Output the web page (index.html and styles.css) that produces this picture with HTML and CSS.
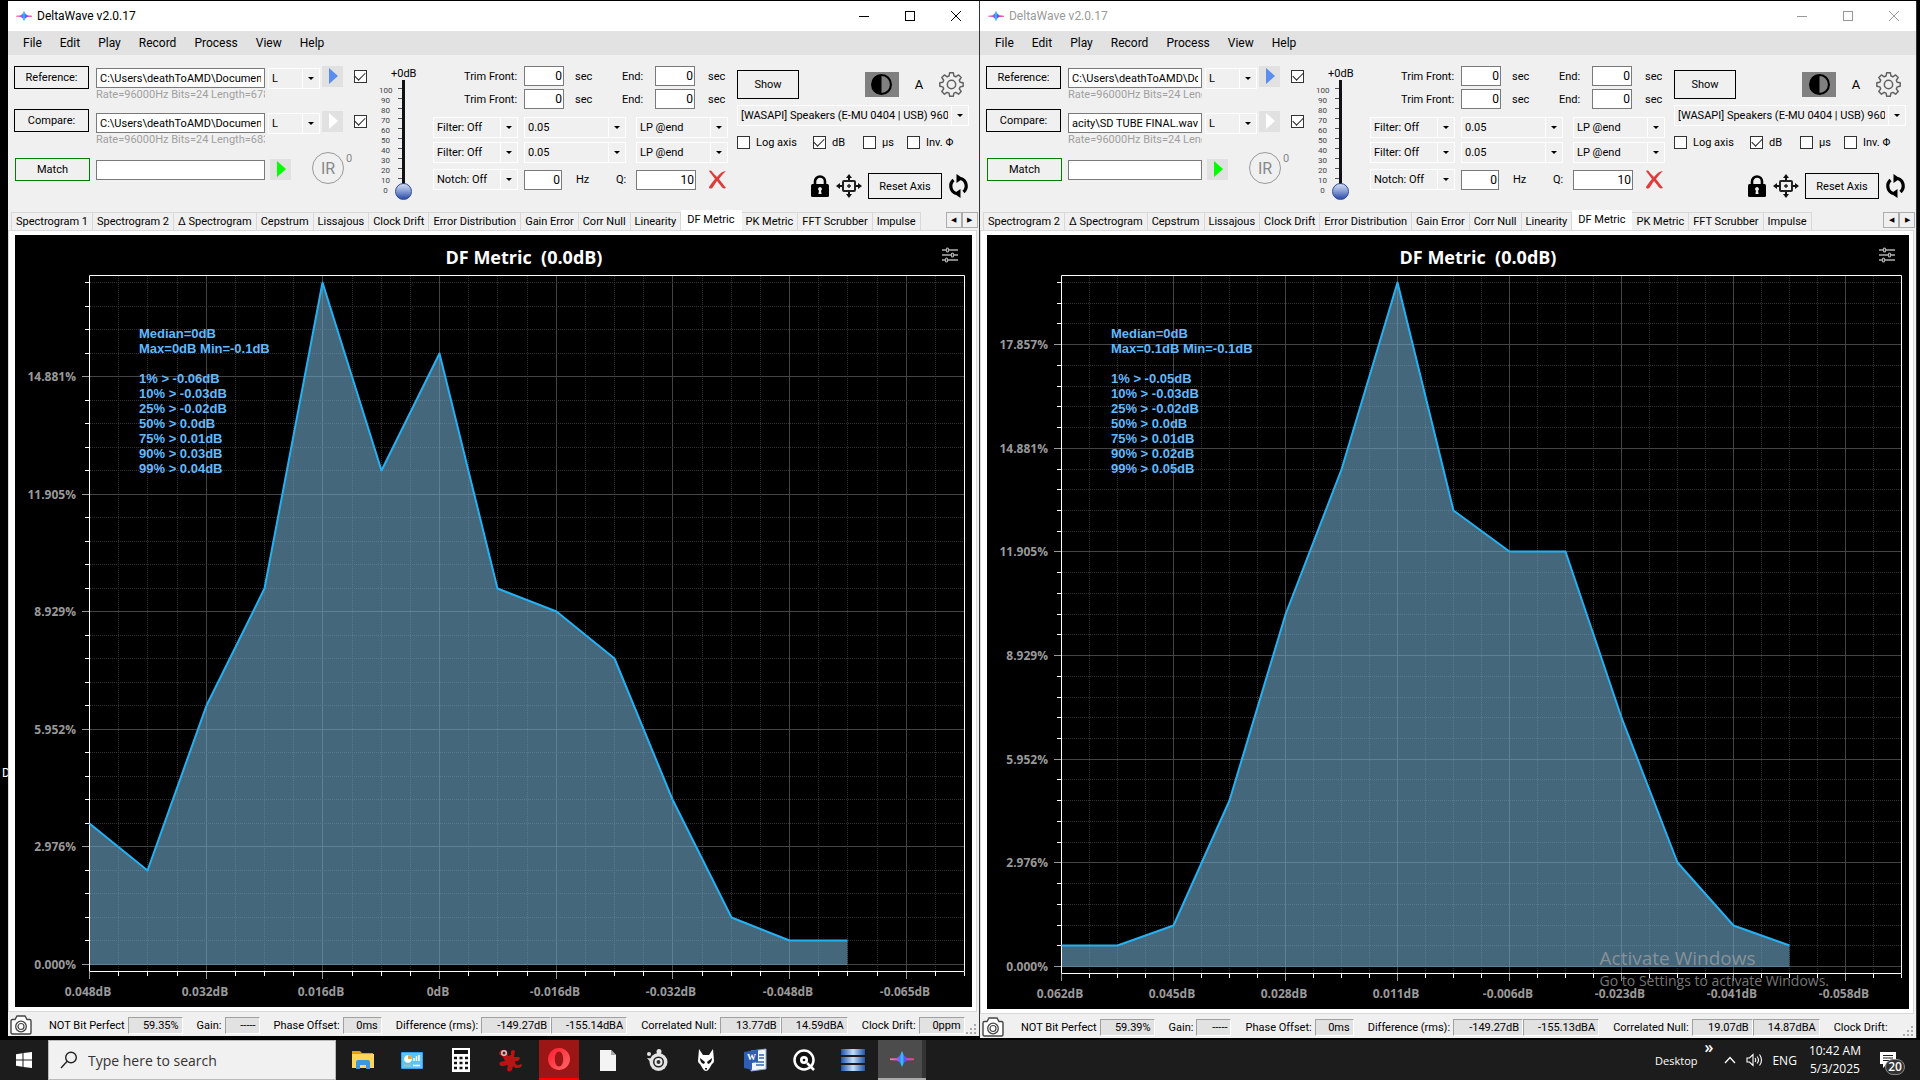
FILE: index.html
```html
<!DOCTYPE html>
<html lang="en">
<head>
    <meta charset="UTF-8">
    <meta name="viewport" content="width=device-width, initial-scale=1.0">
    <title>DeltaWave v2.0.17</title>
    <link rel="stylesheet" href="styles.css">
</head>
<body>
    <!-- shared icons -->
    <svg class="sprite" aria-hidden="true">
        <defs>
            <linearGradient id="wave-h" x1="0" x2="1" y1="0" y2="0">
                <stop offset="0" stop-color="#ff8a9a"/>
                <stop offset=".25" stop-color="#e050c0"/>
                <stop offset=".4" stop-color="#5a6cff"/>
                <stop offset=".5" stop-color="#19d8ff"/>
                <stop offset=".6" stop-color="#5a50ff"/>
                <stop offset=".8" stop-color="#e040c0"/>
                <stop offset="1" stop-color="#ff4a70"/>
            </linearGradient>
            <linearGradient id="bar-blue" x1="0" x2="1" y1="0" y2="0">
                <stop offset="0" stop-color="#1d55a8"/>
                <stop offset=".5" stop-color="#c4dcf8"/>
                <stop offset="1" stop-color="#1d55a8"/>
            </linearGradient>
            <linearGradient id="opera-red" x1="0" x2="1" y1="0" y2="1">
                <stop offset="0" stop-color="#ff1b2d"/>
                <stop offset="1" stop-color="#ff6a6a"/>
            </linearGradient>
        </defs>
        <symbol id="i-wave" viewBox="0 0 24 24">
            <path d="M0 11.500 L7 11 L10 8.500 L12 4 L14 8.500 L17 11 L24 11.500 V13 L17 13.500 L14 15.500 L12 20 L10 15.500 L7 13.500 L0 13 Z" fill="url(#wave-h)"/>
        </symbol>
        <symbol id="i-play" viewBox="0 0 21 21">
            <path d="M7 2 L16 10 L7 18 Z" fill="currentColor"/>
        </symbol>
        <symbol id="i-contrast" viewBox="0 0 20 20">
            <circle cx="10" cy="10" r="9" fill="none" stroke="#000" stroke-width="2"/>
            <path d="M10 1 A9 9 0 0 0 10 19 Z" fill="#000"/>
        </symbol>
        <symbol id="i-gear" viewBox="0 0 24 24">
            <path fill="none" stroke="#606060" stroke-width="1.4" stroke-linejoin="round" d="M10.2 .8h3.6l.5 3 1.9.8 2.6-1.8 2.5 2.5-1.8 2.6.8 1.9 2.9.5v3.4l-2.9.6-.8 1.9 1.8 2.5-2.5 2.6-2.6-1.8-1.9.8-.5 2.9h-3.6l-.5-2.9-1.9-.8-2.6 1.8-2.5-2.6 1.8-2.5-.8-1.9-2.9-.6v-3.4l2.9-.5.8-1.9L2.7 5.300l2.5-2.5 2.6 1.800 1.900-.8z"/>
            <circle cx="12" cy="12" r="4" fill="none" stroke="#606060" stroke-width="1.4"/>
        </symbol>
        <symbol id="i-cross" viewBox="0 0 19 19">
            <path d="M1 1 C3 0 4 1 5 3 L9 7 C12 3 15 1 18 1 C15 4 13 6 11 9 L18 18 C16 19 14 18 13 16 L9 11 L5 17 C4 19 1 19 1 17 C3 14 5 11 7 9 Z" fill="#dd3c3c"/>
        </symbol>
        <symbol id="i-lock" viewBox="0 0 20 22">
            <path d="M5 10 V6.500 a5 5 0 0 1 10 0 V10" fill="none" stroke="#000" stroke-width="2.600"/>
            <rect x="1" y="9" width="18" height="13" rx="1.500"/>
            <path d="M10 12 a2 2 0 0 1 1 3.700 l.6 3.300 h-3.200 l.6-3.300 a2 2 0 0 1 1-3.700z" fill="#eee"/>
        </symbol>
        <symbol id="i-move" viewBox="0 0 26 24">
            <rect x="7" y="7" width="12" height="10" rx="1" fill="none" stroke="#222" stroke-width="2"/>
            <path d="M13 10 v4 M11 12 h4" stroke="#222" stroke-width="1.400"/>
            <path d="M13 0 l3 4 h-2 v2 h-2 v-2 h-2z M13 24 l3-4 h-2 v-2 h-2 v2 h-2z M0 12 l4-3 v2 h2 v2 h-2 v2z M26 12 l-4-3 v2 h-2 v2 h2 v2z" fill="#111"/>
        </symbol>
        <symbol id="i-refresh" viewBox="0 0 20 24">
            <path d="M7.500 19.500 A8 8 0 0 1 5 6" fill="none" stroke="#000" stroke-width="3.200"/>
            <path d="M12.500 4.500 A8 8 0 0 1 15 18" fill="none" stroke="#000" stroke-width="3.200"/>
            <path d="M8 0 L8 9 L14.500 4.500 Z M12 15 L12 24 L5.500 19.500 Z"/>
        </symbol>
        <symbol id="i-sliders" viewBox="0 0 16 16">
            <path d="M0 3 H4 M7 3 H16 M0 8 H9 M12 8 H16 M0 13 H3 M6 13 H16" stroke="#b0b0b0" stroke-width="1.400"/>
            <g fill="none" stroke="#b0b0b0" stroke-width="1.200">
                <rect x="4.500" y="1" width="2" height="4" rx="1"/>
                <rect x="9.500" y="6" width="2" height="4" rx="1"/>
                <rect x="3.500" y="11" width="2" height="4" rx="1"/>
            </g>
        </symbol>
        <symbol id="i-camera" viewBox="0 0 22 20">
            <path d="M1 6 q0-1.500 1.500-1.500 H5 L7 1 h8 l2 3.500 h2.500 q1.500 0 1.500 1.500 V17.500 q0 1.500-1.500 1.500 h-17 q-1.500 0-1.500-1.500z" fill="#fff" stroke="#444" stroke-width="1.400"/>
            <circle cx="11" cy="11.500" r="5.300" fill="none" stroke="#444" stroke-width="1.300"/>
            <circle cx="11" cy="11.500" r="3" fill="none" stroke="#444" stroke-width="1.200"/>
        </symbol>
    </svg>

    <main class="desktop" id="desktop">
        <span class="desktop-label">D</span>
    </main>

    <div class="watermark">
        <p class="watermark-title">Activate Windows</p>
        <p>Go to Settings to activate Windows.</p>
    </div>

    <footer class="taskbar">
        <button class="start" aria-label="Start">
            <svg width="16" height="16" viewBox="0 0 16 16" fill="#fff"><path d="M0 2.300 L6.500 1.300 V7.500 H0z M7.500 1.100 L16 0 V7.500 H7.500z M0 8.500 H6.500 V14.700 L0 13.700z M7.500 8.500 H16 V16 L7.500 14.900z"/></svg>
        </button>
        <label class="search">
            <svg width="18" height="18" viewBox="0 0 18 18" fill="none" stroke="#222" stroke-width="1.400"><circle cx="11" cy="6.500" r="5.300"/><path d="M7.200 10.300 L1 17"/></svg>
            <input type="text" placeholder="Type here to search" aria-label="Search">
        </label>
        <nav class="apps">
            <button class="app" aria-label="File Explorer">
                <svg width="24" height="20" viewBox="0 0 24 20"><path d="M1 1 h8 l2 2 h11 v15 h-21z" fill="#e2a100"/><path d="M1 4 h22 v14 h-22z" fill="#ffd55c"/><path d="M5 19 v-7 q0-2 2-2 h10 q2 0 2 2 v7 h-4 v-4 h-6 v4z" fill="#3b97e0"/></svg>
            </button>
            <button class="app" aria-label="Control Panel">
                <svg width="22" height="17" viewBox="0 0 22 17"><rect width="22" height="17" rx="1" fill="#3aa0e8"/><rect x="1" y="1" width="20" height="15" fill="#5cc4fa"/><circle cx="7" cy="7" r="3.800" fill="#fff"/><path d="M7 7 V3.200 A3.800 3.800 0 0 1 10.800 7z" fill="#f2a230"/><path d="M13 9 v-3 M15.500 9 v-5 M18 9 v-6" stroke="#fff" stroke-width="1.500"/><path d="M3 13.500 h7" stroke="#f2b040" stroke-width="1.500"/><path d="M12 13.500 h7" stroke="#fff" stroke-width="1.500"/></svg>
            </button>
            <button class="app" aria-label="Calculator">
                <svg width="18" height="24" viewBox="0 0 18 24"><rect width="18" height="24" fill="#fff"/><rect x="2" y="2" width="14" height="4" fill="#111"/><path d="M2 10 h14 M2 15 h14 M2 20 h14" stroke="#111" stroke-width="2.500" stroke-dasharray="3 2.500"/></svg>
            </button>
            <button class="app" aria-label="IrfanView">
                <svg width="24" height="24" viewBox="0 0 24 24"><path d="M1 6 Q2 1 7 2 Q10 3 10 8 L13 7 L13 3 Q15 1 17 3 L16 9 L21 9 Q23 11 20 13 L17 13 Q17 17 20 17 L24 16 Q24 20 20 20 Q16 20 15 18 L14 22 Q11 25 9 22 L10 17 L5 18 Q0 18 2 14 L7 13 L5 9 Z" fill="#b81414"/><circle cx="6" cy="5" r="3" fill="#ccc"/><circle cx="6" cy="5" r="1.500" fill="#7a1010"/></svg>
            </button>
            <button class="app app-opera" aria-label="Opera">
                <svg width="24" height="24" viewBox="0 0 24 24"><path fill="url(#opera-red)" fill-rule="evenodd" d="M12 1 a11 11 0 1 0 .01 0z M12 4.500 c2.600 0 4.200 3.300 4.200 7.500 s-1.600 7.500-4.200 7.500 s-4.200-3.300-4.200-7.500 s1.600-7.500 4.200-7.500z"/></svg>
            </button>
            <button class="app" aria-label="Document">
                <svg width="16" height="22" viewBox="0 0 16 22"><path d="M0 1 h11 l5 5 v16 h-16z" fill="#f4f4f4"/><path d="M11 1 v5 h5z" fill="#a8a8a8"/></svg>
            </button>
            <button class="app" aria-label="SteelSeries">
                <svg width="22" height="22" viewBox="0 0 22 22"><g fill="#e4e4e4"><circle cx="12.500" cy="13" r="9"/><circle cx="3" cy="5" r="2"/><circle cx="13" cy="2.500" r="2.500"/><path d="M1 9 l8 1 -3 5z M11 2 h4 v5 h-4z"/></g><circle cx="12.500" cy="13" r="5.500" fill="#222"/><circle cx="12.500" cy="13" r="4" fill="#eee"/><circle cx="12.500" cy="13" r="2" fill="#333"/></svg>
            </button>
            <button class="app" aria-label="foobar2000">
                <svg width="18" height="22" viewBox="0 0 18 22"><path d="M2 0 L6 6 H12 L16 0 L17 12 Q17 14 15 15 L12 20 Q9 24 6 20 L3 15 Q1 14 1 12 Z" fill="#fff"/><path d="M3 9 l5 4 -1 2 q-4-1-4-6z M15 9 l-5 4 1 2 q4-1 4-6z M8 19 h2 v1.500 h-2z" fill="#111"/></svg>
            </button>
            <button class="app" aria-label="WordPad">
                <svg width="24" height="24" viewBox="0 0 24 24"><path d="M8 3 l15-2 v20 l-15 2z" fill="#f2f6fc" stroke="#8aa6d8"/><path d="M16 7 h5 M16 10 h5 M13 14 h8 M13 17 h8" stroke="#3a64b0" stroke-width="1.500"/><path d="M1 4 L15 1.500 V14 L9 15 V22 L1 20 Z" fill="#2e5fb4"/><text x="4" y="12" class="word-mark">W</text></svg>
            </button>
            <button class="app" aria-label="Qobuz">
                <svg width="24" height="24" viewBox="0 0 24 24"><circle cx="12" cy="12" r="9.500" fill="#111" stroke="#fff" stroke-width="2.500"/><circle cx="12" cy="12" r="4" fill="#fff"/><circle cx="12" cy="12" r="1.300" fill="#111"/><path d="M15 15 l7 7" stroke="#fff" stroke-width="2.500"/></svg>
            </button>
            <button class="app" aria-label="Database">
                <svg width="24" height="22" viewBox="0 0 24 22" fill="url(#bar-blue)"><rect width="24" height="6"/><rect y="8" width="24" height="6"/><rect y="16" width="24" height="6"/></svg>
            </button>
            <button class="app app-active" aria-label="DeltaWave">
                <svg width="24" height="24"><use href="#i-wave"/></svg>
            </button>
        </nav>
        <div class="tray">
            <span class="tray-desktop">Desktop</span>
            <span class="tray-more">»</span>
            <svg class="tray-chevron" width="12" height="8" viewBox="0 0 12 8" fill="none" stroke="#fff" stroke-width="1.300"><path d="M1 7 L6 1.500 L11 7"/></svg>
            <svg class="tray-volume" width="17" height="14" viewBox="0 0 17 14" fill="none" stroke="#fff" stroke-width="1.100"><path d="M1 5 h2.500 L7 1.500 V12.500 L3.500 9 H1z M9 5 q1.500 2 0 4 M11 3.500 q3 3.500 0 7 M13.500 1.500 q4 5.500 0 11"/></svg>
            <span class="tray-lang">ENG</span>
            <div class="clock"><span>10:42 AM</span><span>5/3/2025</span></div>
            <div class="notify">
                <svg width="16" height="16" viewBox="0 0 16 16"><path d="M0 0 h16 v12 h-9 l-4 4 v-4 h-3z" fill="#fff"/><path d="M3 3.500 h10 M3 6 h10 M3 8.500 h7" stroke="#1c1c1c" stroke-width="1.200"/></svg>
                <span class="badge">20</span>
            </div>
        </div>
    </footer>

    <script src="script.js"></script>
</body>
</html>
```

FILE: styles.css
```css
* {
    margin: 0;
    padding: 0;
    box-sizing: border-box;
}

body {
    height: 100vh;
    display: flex;
    flex-direction: column;
    background: #000;
    font-family: Roboto, "Liberation Sans", sans-serif;
    font-size: 11px;
    color: #000;
    overflow: hidden;
}

button, input, select {
    font: inherit;
    color: inherit;
    border: none;
    border-radius: 0;
    background: none;
    outline: none;
}

button {
    cursor: pointer;
}

svg {
    display: block;
    flex: none;
}

.sprite {
    position: absolute;
    width: 0;
    height: 0;
}

/* desktop and windows */
.desktop {
    position: relative;
    flex: 1;
    min-height: 0;
    display: flex;
    padding: 1px 3px 0 8px;
}

.desktop-label {
    position: absolute;
    left: 2px;
    top: 766px;
    color: #fff;
    font-size: 12px;
}

.window {
    position: relative;
    flex: 972 1 0;
    min-width: 0;
    margin-bottom: 4px;
    display: flex;
    flex-direction: column;
    background: #f0f0f0;
    border-right: 1px solid #333;
}

.window.narrow {
    flex-grow: 937;
    margin-bottom: 2px;
}

.titlebar {
    height: 30px;
    display: flex;
    align-items: center;
    padding: 0 2px 0 8px;
    gap: 5px;
    background: #fff;
    font-size: 12px;
}

.titlebar h1 {
    flex: 1;
    font-size: 12px;
    font-weight: 400;
}

.titlebar button {
    width: 41px;
    height: 30px;
    display: grid;
    place-items: center;
}

.narrow .titlebar {
    color: #999;
}

.menubar {
    height: 24px;
    display: flex;
    align-items: center;
    gap: 18px;
    padding-left: 15px;
    background: #e2e2e2;
    font-size: 12px;
}

.menubar a {
    color: #000;
    text-decoration: none;
}

/* toolbar */
.toolbar {
    height: 155px;
    display: flex;
    padding: 11px 10px 0 6px;
    line-height: 13px;
}

.col {
    display: flex;
    flex-direction: column;
    flex: none;
}

.row {
    display: flex;
    align-items: center;
}

.push {
    margin-left: auto;
}

.btn {
    border: 1px solid #000;
}

.file-buttons {
    width: 76px;
    gap: 20px;
    margin-right: 6px;
}

.file-buttons .btn {
    width: 75px;
    height: 23px;
}

.file-buttons .btn-match {
    border-color: #008000;
    margin: 6px 0 0 1px;
}

.file-paths {
    flex: 1;
    min-width: 0;
    padding-top: 2px;
}

.field {
    height: 20px;
    padding: 0 3px;
    border: 1px solid #7a7a7a;
    background: #fff;
    min-width: 0;
}

.field-num {
    text-align: right;
    padding: 0 1px;
    font-size: 12px;
}

.w-trim {
    width: 40px;
}

.w-notch {
    width: 38px;
    margin: 0 14px 0 6px;
}

.w-q {
    width: 60px;
    margin-right: 12px;
}

.file-paths .field {
    width: 100%;
}

.file-paths p {
    height: 25px;
    color: #a0a0a0;
    white-space: nowrap;
    overflow: hidden;
}

.file-paths .field-match {
    margin-top: 2px;
}

.channels {
    width: 110px;
    padding-left: 3px;
}

.channels .row {
    height: 45px;
    align-items: flex-start;
}

.channels .row:nth-child(2) {
    height: 41px;
}

.channels .icon-btn {
    margin: 0 11px 0 2px;
}

.channels .match-row .icon-btn {
    margin-top: 7px;
}

.channels .tick {
    margin-top: 4px;
}

.channels .select {
    margin-top: 2px;
}

.icon-btn {
    width: 21px;
    height: 21px;
    background: #e1e1e1;
}

.icon-blue {
    color: #5a8df0;
}

.icon-white {
    color: #fff;
}

.icon-green {
    color: #00ff00;
}

.ir {
    width: 32px;
    height: 32px;
    margin: 0 2px 0 10px;
    border: 1px solid #999;
    border-radius: 50%;
    color: #888;
    font-size: 16px;
}

.ir-count {
    color: #888;
}

.select {
    position: relative;
    display: block;
    height: 21px;
    border: 1px solid #fff;
}

.select select {
    width: 100%;
    height: 100%;
    padding: 0 20px 0 3px;
    appearance: none;
    overflow: hidden;
}

.select::before {
    content: "";
    position: absolute;
    right: 16px;
    top: 0;
    bottom: 0;
    border-left: 1px solid #fff;
}

.select::after {
    content: "";
    position: absolute;
    right: 5px;
    top: 8px;
    border: 3px solid transparent;
    border-top-color: #000;
    border-bottom: 0;
}

.s-channel {
    width: 52px;
}

.s-filter {
    width: 85px;
}

.s-value {
    width: 102px;
    margin: 0 10px 0 6px;
}

.s-pass {
    width: 92px;
}

.tick {
    appearance: none;
    flex: none;
    width: 13px;
    height: 13px;
    border: 1px solid #333;
    background: #fff;
    display: grid;
    place-items: center;
}

.tick:checked::before {
    content: "";
    width: 9px;
    height: 5px;
    margin-top: -3px;
    border-left: 1px solid #222;
    border-bottom: 1px solid #222;
    transform: rotate(-45deg);
}

/* volume */
.volume {
    width: 58px;
    padding-top: 1px;
}

.volume label {
    padding-left: 16px;
}

.volume-body {
    display: flex;
    gap: 3px;
    padding-left: 4px;
}

.scale {
    width: 13px;
    padding-top: 6px;
    list-style: none;
    text-align: center;
    font-size: 8px;
    line-height: 10px;
    color: #444;
}

.volume input {
    appearance: none;
    writing-mode: vertical-lr;
    direction: rtl;
    width: 17px;
    height: 120px;
    background:
        linear-gradient(#101018, #101018) 7px 0 / 3px 110px no-repeat,
        repeating-linear-gradient(transparent 0 8px, #555 8px 9px, transparent 9px 10px) 3px 0 / 5px 100px no-repeat;
}

.volume input::-webkit-slider-thumb {
    appearance: none;
    width: 17px;
    height: 17px;
    border: 1px solid #2a4a9a;
    border-radius: 50%;
    background: linear-gradient(#d4dcf0, #8da2d8 45%, #2c4da8);
}

/* trim and filters */
.params {
    width: 295px;
    margin-right: 9px;
}

.trim {
    height: 20px;
    margin-bottom: 3px;
    display: grid;
    grid-template-columns: 91px 51px 47px 33px 53px 20px;
    align-items: center;
}

.trim label:first-child {
    padding-left: 31px;
}

.filter {
    margin-top: 4px;
}

.filter-first {
    margin-top: 5px;
}

.notch {
    margin-top: 6px;
}

.notch label {
    width: 20px;
}

.hz {
    width: 40px;
}

/* view options */
.options {
    width: 232px;
    padding-top: 4px;
}

.btn-show {
    width: 62px;
    height: 29px;
}

.contrast {
    width: 34px;
    height: 25px;
    background: #808080;
    display: grid;
    place-items: center;
}

.auto {
    width: 40px;
    font-size: 13px;
    text-align: center;
}

.gear {
    margin-right: 5px;
}

.options .select {
    margin-top: 6px;
}

.checks {
    display: grid;
    grid-template-columns: 76px 50px 44px 1fr;
    margin-top: 10px;
}

.checks label {
    display: flex;
    align-items: center;
    gap: 6px;
    white-space: nowrap;
}

.axis-row {
    gap: 6px;
    margin-top: 24px;
    justify-content: flex-end;
}

.axis-row .btn {
    width: 74px;
    height: 26px;
}

/* tabs */
.tabs {
    height: 20px;
    display: flex;
    align-items: flex-end;
    padding-left: 3px;
    white-space: nowrap;
}

.tab {
    height: 18px;
    padding: 0 4px;
    border: 1px solid #d9d9d9;
    border-bottom: 0;
    border-left-width: 0;
}

.tab:first-child {
    border-left-width: 1px;
}

.tab.active {
    height: 20px;
    padding: 0 6px 3px;
    background: #fff;
    border-color: #fff;
}

.tab-scroll {
    display: flex;
    align-self: flex-start;
    margin: 2px 1px 0 auto;
}

.tab-scroll button {
    width: 16px;
    height: 16px;
    border: 1px solid #acacac;
    font-size: 7px;
    line-height: 10px;
}

.tab-page {
    flex: 1;
    min-height: 0;
    margin-right: 2px;
    padding: 4px 4px 4px 6px;
    border: 1px solid #d9d9d9;
    background: #fff;
}

.chart {
    position: relative;
    width: 100%;
    height: 100%;
    background: #000;
    overflow: hidden;
}

.chart svg.plot {
    width: 100%;
    height: 100%;
}

.chart-menu {
    position: absolute;
    right: 14px;
    top: 12px;
}

.readout {
    position: absolute;
    left: 124px;
    top: 91px;
    font: bold 13px/15px "Liberation Sans", sans-serif;
    color: #5fbaff;
}

.major {
    stroke: #444;
}

.minor {
    stroke: #333;
    stroke-dasharray: 1 1;
}

.axis {
    fill: none;
    stroke: #fff;
}

.mark {
    stroke: #999;
}

.area {
    fill: #6fa6c8;
    fill-opacity: .62;
}

.line {
    fill: none;
    stroke: #22b2f4;
    stroke-width: 2;
    stroke-linejoin: round;
}

.axis-label {
    font: 700 12px "Open Sans", "Noto Sans", sans-serif;
    fill: #999;
}

.chart-title {
    font: 700 18px "Open Sans", "Noto Sans", sans-serif;
    fill: #fff;
    text-anchor: middle;
    white-space: pre;
}

/* status bar */
.statusbar {
    height: 24px;
    display: flex;
    align-items: center;
    padding: 2px 0 0 2px;
    white-space: nowrap;
    overflow: hidden;
}

.statusbar .camera {
    margin-right: 17px;
}

.statusbar .name {
    padding-right: 3px;
}

.statusbar output {
    height: 17px;
    padding-right: 3px;
    margin-right: 14px;
    border: 1px solid #a0a0a0;
    border-right-color: #fff;
    border-bottom-color: #fff;
    background: #e2e2e2;
    text-align: right;
    line-height: 16px;
}

.statusbar .joined {
    margin-right: 0;
}

.grip {
    margin: 8px 2px 0 auto;
}

/* activation notice */
.watermark {
    position: absolute;
    right: 91px;
    bottom: 89px;
    font: 14px/20px "Open Sans", "Noto Sans", sans-serif;
    color: rgba(160, 160, 160, .75);
}

.watermark-title {
    font-size: 19px;
    line-height: 26px;
}

/* taskbar */
.taskbar {
    height: 40px;
    flex: none;
    display: flex;
    background: #1c1c1c;
    color: #fff;
    font-family: "Open Sans", "Noto Sans", sans-serif;
    font-size: 12px;
}

.start {
    width: 48px;
    display: grid;
    place-items: center;
}

.search {
    width: 288px;
    display: flex;
    align-items: center;
    gap: 10px;
    padding-left: 11px;
    background: #f1f1f1;
    border: 1px solid #bbb;
}

.search input {
    flex: 1;
    font-size: 14px;
    color: #333;
}

.search input::placeholder {
    color: #333;
}

.apps {
    display: flex;
    gap: 9px;
    padding-left: 7px;
}

.app {
    width: 40px;
    height: 40px;
    display: grid;
    place-items: center;
}

.app-opera {
    background: #9c1616;
    border-bottom: 2px solid #ff0000;
}

.app-active {
    width: 48px;
    margin-left: -4px;
    background: linear-gradient(90deg, #4c4c4c 44px, #333 44px);
    border-bottom: 2px solid #aaa;
}

.word-mark {
    font: bold 9px "Liberation Serif", serif;
    fill: #fff;
}

.tray {
    margin-left: auto;
    display: flex;
    align-items: center;
    padding-right: 14px;
}

.tray-desktop {
    font-size: 11px;
}

.tray-more {
    margin: -26px 11px 0 7px;
    font-size: 16px;
    font-weight: 600;
}

.tray-chevron {
    margin-right: 10px;
}

.tray-volume {
    margin-right: 9px;
}

.tray-lang {
    margin-right: 12px;
}

.clock {
    display: flex;
    flex-direction: column;
    align-items: center;
    margin-right: 19px;
    line-height: 18px;
}

.notify {
    position: relative;
    width: 26px;
}

.badge {
    position: absolute;
    left: 5px;
    top: 7px;
    width: 20px;
    height: 16px;
    border: 1px solid #888;
    border-radius: 8px;
    background: #333;
    font-size: 12px;
    font-weight: 600;
    line-height: 14px;
    text-align: center;
}
```

FILE: script.js
```js
// share of one sample in the histogram, in percent
const STEP = 100 / 168;

const windows = [
    {
        id: 'w1',
        narrow: false,
        reference: 'C:\\Users\\deathToAMD\\Documents\\Audacity',
        compare: 'C:\\Users\\deathToAMD\\Documents\\Audacity',
        rates: ['Rate=96000Hz Bits=24 Length=6789120', 'Rate=96000Hz Bits=24 Length=6834200'],
        tabs: ['Spectrogram 1', 'Spectrogram 2', 'Δ Spectrogram', 'Cepstrum', 'Lissajous', 'Clock Drift', 'Error Distribution', 'Gain Error', 'Corr Null', 'Linearity', 'DF Metric', 'PK Metric', 'FFT Scrubber', 'Impulse'],
        counts: [6, 4, 11, 16, 29, 21, 26, 16, 15, 13, 7, 2, 1, 1],
        xLabels: ['0.048dB', '0.032dB', '0.016dB', '0dB', '-0.016dB', '-0.032dB', '-0.048dB', '-0.065dB'],
        readout: 'Median=0dB\nMax=0dB Min=-0.1dB\n\n1% > -0.06dB\n10% > -0.03dB\n25% > -0.02dB\n50% > 0.0dB\n75% > 0.01dB\n90% > 0.03dB\n99% > 0.04dB',
        status: { perfect: '59.35%', rms: '-149.27dB', rmsA: '-155.14dBA', nul: '13.77dB', nulA: '14.59dBA', drift: '0ppm' }
    },
    {
        id: 'w2',
        narrow: true,
        reference: 'C:\\Users\\deathToAMD\\Documents\\Audacity',
        compare: 'acity\\SD TUBE FINAL.wav',
        rates: ['Rate=96000Hz Bits=24 Length=6789120', 'Rate=96000Hz Bits=24 Length=6834200'],
        tabs: ['Spectrogram 2', 'Δ Spectrogram', 'Cepstrum', 'Lissajous', 'Clock Drift', 'Error Distribution', 'Gain Error', 'Corr Null', 'Linearity', 'DF Metric', 'PK Metric', 'FFT Scrubber', 'Impulse'],
        counts: [1, 1, 2, 8, 17, 24, 33, 22, 20, 20, 12, 5, 2, 1],
        xLabels: ['0.062dB', '0.045dB', '0.028dB', '0.011dB', '-0.006dB', '-0.023dB', '-0.041dB', '-0.058dB'],
        readout: 'Median=0dB\nMax=0.1dB Min=-0.1dB\n\n1% > -0.05dB\n10% > -0.03dB\n25% > -0.02dB\n50% > 0.0dB\n75% > 0.01dB\n90% > 0.02dB\n99% > 0.05dB',
        status: { perfect: '59.39%', rms: '-149.27dB', rmsA: '-155.13dBA', nul: '19.07dB', nulA: '14.87dBA', drift: '' }
    }
];

const icon = (name, w, h, cls = '') => `<svg class="${cls}" width="${w}" height="${h}"><use href="#i-${name}"/></svg>`;

const select = (cls, label, value) => `
    <span class="select ${cls}"><select aria-label="${label}"><option>${value}</option></select></span>`;

const channelRow = (label, color) => `
    <div class="row">
        ${select('s-channel', label + ' channel', 'L')}
        <button class="icon-btn icon-${color}" aria-label="Play ${label}">${icon('play', 21, 21)}</button>
        <input class="tick" type="checkbox" aria-label="Use ${label}" checked>
    </div>`;

const trimRow = (id, n) => `
    <div class="trim">
        <label for="${id}-front${n}">Trim Front:</label>
        <input class="field field-num w-trim" id="${id}-front${n}" type="text" value="0">
        <span>sec</span>
        <label for="${id}-end${n}">End:</label>
        <input class="field field-num w-trim" id="${id}-end${n}" type="text" value="0">
        <span>sec</span>
    </div>`;

const filterRow = cls => `
    <div class="row filter ${cls}">
        ${select('s-filter', 'Filter', 'Filter: Off')}
        ${select('s-value', 'Filter value', '0.05')}
        ${select('s-pass', 'Filter type', 'LP @end')}
    </div>`;

const output = (value, width, cls = '') => `<output class="${cls}" style="width:${width}px">${value}</output>`;

function windowTemplate(w) {
    const s = w.status;
    return `
    <section class="window ${w.narrow ? 'narrow' : ''}">
        <header class="titlebar">
            ${icon('wave', 16, 16)}
            <h1>DeltaWave v2.0.17</h1>
            <button aria-label="Minimize"><svg width="10" height="10" stroke="currentColor"><path d="M0 5.500 h10"/></svg></button>
            <button aria-label="Maximize"><svg width="10" height="10" fill="none" stroke="currentColor"><rect x=".5" y=".5" width="9" height="9"/></svg></button>
            <button aria-label="Close"><svg width="10" height="10" stroke="currentColor"><path d="M0 0 L10 10 M10 0 L0 10"/></svg></button>
        </header>
        <nav class="menubar">
            ${['File', 'Edit', 'Play', 'Record', 'Process', 'View', 'Help'].map(m => `<a href="#">${m}</a>`).join('')}
        </nav>
        <div class="toolbar">
            <div class="col file-buttons">
                <button class="btn">Reference:</button>
                <button class="btn">Compare:</button>
                <button class="btn btn-match">Match</button>
            </div>
            <div class="col file-paths">
                <input class="field" type="text" aria-label="Reference file" value="${w.reference}">
                <p>${w.rates[0]}</p>
                <input class="field" type="text" aria-label="Compare file" value="${w.compare}">
                <p>${w.rates[1]}</p>
                <input class="field field-match" type="text" aria-label="Match result">
            </div>
            <div class="col channels">
                ${channelRow('reference', 'blue')}
                ${channelRow('compare', 'white')}
                <div class="row match-row">
                    <button class="icon-btn icon-green" aria-label="Play match">${icon('play', 21, 21)}</button>
                    <button class="ir">IR</button>
                    <span class="ir-count">0</span>
                </div>
            </div>
            <div class="col volume">
                <label for="${w.id}-volume">+0dB</label>
                <div class="volume-body">
                    <ul class="scale">${[100, 90, 80, 70, 60, 50, 40, 30, 20, 10, 0].map(n => `<li>${n}</li>`).join('')}</ul>
                    <input id="${w.id}-volume" type="range" min="0" max="100" value="0">
                </div>
            </div>
            <div class="col params">
                ${trimRow(w.id, 1)}
                ${trimRow(w.id, 2)}
                ${filterRow('filter-first')}
                ${filterRow('')}
                <div class="row notch">
                    ${select('s-filter', 'Notch', 'Notch: Off')}
                    <input class="field field-num w-notch" type="text" aria-label="Notch frequency" value="0">
                    <span class="hz">Hz</span>
                    <label for="${w.id}-q">Q:</label>
                    <input class="field field-num w-q" id="${w.id}-q" type="text" value="10">
                    <button aria-label="Clear">${icon('cross', 19, 19)}</button>
                </div>
            </div>
            <div class="col options">
                <div class="row">
                    <button class="btn btn-show">Show</button>
                    <button class="contrast push" aria-label="Contrast">${icon('contrast', 21, 21)}</button>
                    <button class="auto">A</button>
                    <button class="gear" aria-label="Settings">${icon('gear', 25, 25)}</button>
                </div>
                ${select('', 'Output device', '[WASAPI] Speakers (E-MU 0404 | USB) 96000Hz')}
                <div class="checks">
                    <label><input class="tick" type="checkbox">Log axis</label>
                    <label><input class="tick" type="checkbox" checked>dB</label>
                    <label><input class="tick" type="checkbox">µs</label>
                    <label><input class="tick" type="checkbox">Inv. Φ</label>
                </div>
                <div class="row axis-row">
                    ${icon('lock', 20, 22)}
                    ${icon('move', 26, 24)}
                    <button class="btn">Reset Axis</button>
                    ${icon('refresh', 21, 24)}
                </div>
            </div>
        </div>
        <div class="tabs">
            ${w.tabs.map(t => `<button class="tab ${t === 'DF Metric' ? 'active' : ''}">${t}</button>`).join('')}
            <div class="tab-scroll"><button>◀</button><button>▶</button></div>
        </div>
        <div class="tab-page">
            <div class="chart">
                <svg class="plot"></svg>
                <pre class="readout">${w.readout.replace(/>/g, '&gt;')}</pre>
                ${icon('sliders', 16, 16, 'chart-menu')}
            </div>
        </div>
        <footer class="statusbar">
            ${icon('camera', 22, 20, 'camera')}
            <span class="name">NOT Bit Perfect</span>${output(s.perfect, 55)}
            <span class="name">Gain:</span>${output('-----', 35)}
            <span class="name">Phase Offset:</span>${output('0ms', 39)}
            <span class="name">Difference (rms):</span>${output(s.rms, 70, 'joined')}${output(s.rmsA, 76)}
            <span class="name">Correlated Null:</span>${output(s.nul, 61, 'joined')}${output(s.nulA, 67)}
            <span class="name">Clock Drift:</span>${s.drift ? output(s.drift, 46, 'joined') : ''}
            <svg class="grip" width="11" height="11" fill="#aaa"><path d="M8 0h2v2h-2z M4 4h2v2h-2z M8 4h2v2h-2z M0 8h2v2h-2z M4 8h2v2h-2z M8 8h2v2h-2z"/></svg>
        </footer>
    </section>`;
}

// draws grid, axes, area and labels at the current size of the chart
function drawChart(svg, w) {
    const width = svg.clientWidth;
    const height = svg.clientHeight;
    const left = 74, right = width - 8, top = 40, bottom = height - 36;
    const unit = (bottom - top - 14) / Math.max(...w.counts);
    const zero = bottom - 7;
    const majorX = (right - left) / 7.5;
    const px = v => Math.round(v) + 0.5;
    let grid = '', marks = '', labels = '';

    for (let i = 0; i <= 30; i++) {
        const x = px(left + i * majorX / 4);
        const major = i % 4 === 0;
        if (i > 0 && i < 30) {
            grid += `<path class="${major ? 'major' : 'minor'}" d="M${x} ${top + 1} V${bottom}"/>`;
        }
        marks += `<path class="${major ? 'mark' : 'axis'}" d="M${x} ${bottom + 1} v${major ? 7 : 4}"/>`;
        if (major) {
            labels += `<text class="axis-label" text-anchor="middle" x="${Math.round(x) - 2}" y="${bottom + 25}">${w.xLabels[i / 4]}</text>`;
        }
    }
    for (let c = 0; zero - c * unit > top; c++) {
        const y = px(zero - c * unit);
        const major = c % 5 === 0;
        grid += `<path class="${major ? 'major' : 'minor'}" d="M${left + 1} ${y} H${right}"/>`;
        marks += `<path class="${major ? 'mark' : 'axis'}" d="M${left} ${y} h${major ? -7 : -4}"/>`;
        if (major) {
            labels += `<text class="axis-label" text-anchor="end" x="${left - 13}" y="${Math.round(y) + 4}">${(c * STEP).toFixed(3)}%</text>`;
        }
    }

    const points = w.counts.map((c, i) => `${px(left + i * majorX / 2)} ${px(zero - c * unit)}`);
    svg.innerHTML = `
        ${grid}
        <path class="area" d="M${points.join(' L')} V${zero + 1} H${left + 0.5} Z"/>
        ${marks}
        <path class="axis" d="M${left + 0.5} ${top + 0.5} H${right + 0.5} V${bottom + 0.5} H${left + 0.5} Z"/>
        <path class="line" d="M${points.join(' L')}"/>
        ${labels}
        <text class="chart-title" x="${Math.round((left + right) / 2) - 3}" y="29">DF Metric  (0.0dB)</text>`;
}

function drawAll() {
    document.querySelectorAll('svg.plot').forEach((svg, i) => drawChart(svg, windows[i]));
}

document.getElementById('desktop').insertAdjacentHTML('beforeend', windows.map(windowTemplate).join(''));
drawAll();
window.addEventListener('resize', drawAll);
```
